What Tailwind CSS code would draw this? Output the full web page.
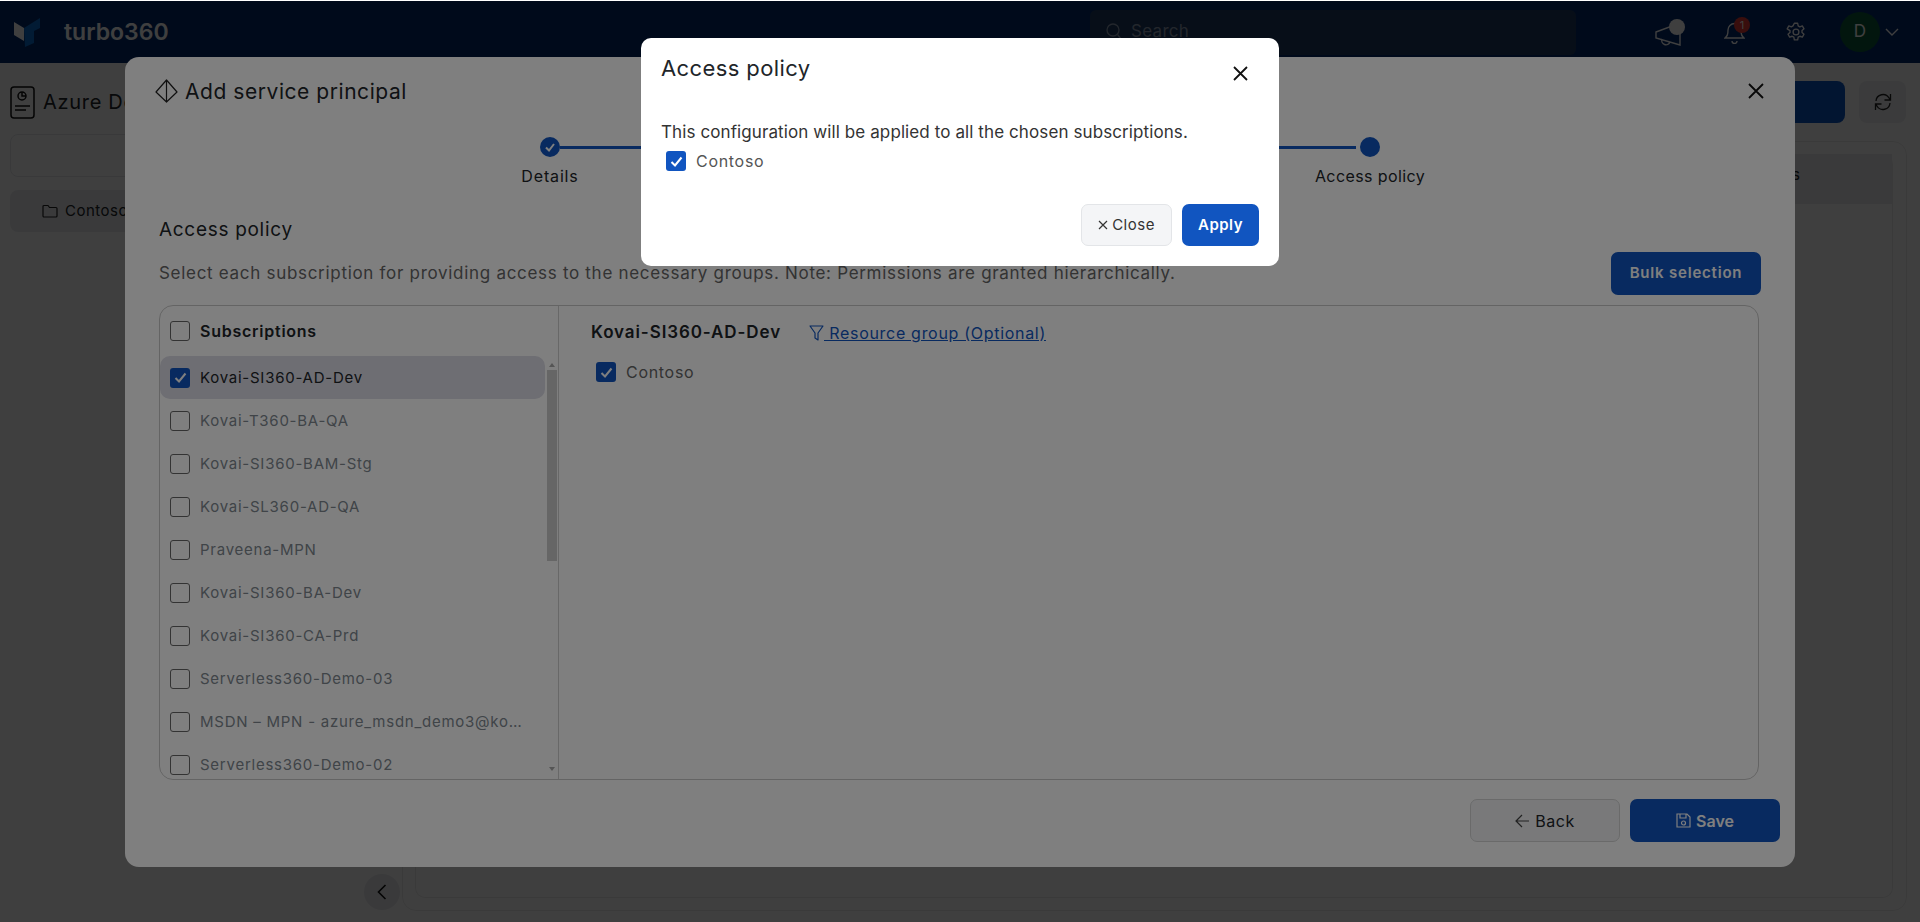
<!DOCTYPE html>
<html lang="en">
<head>
<meta charset="UTF-8" />
<title>turbo360 - Add service principal</title>
<script src="https://cdn.jsdelivr.net/npm/@tailwindcss/browser@4"></script>
</head>
<body class="bg-white h-[922px] overflow-hidden font-['Inter',sans-serif] text-[#212529]">

<!-- page behind the dialogs -->
<div class="h-px bg-white"></div>
<header class="h-[62px] bg-[#002a6e] flex items-center text-white">
  <svg class="ml-[14px] w-[27px] h-[29px] shrink-0" viewBox="0 0 27 29"><path d="M0 4l10 6v13L0 17z" fill="#ffffff"/><path d="M10 10l16-10v10l-6 3v12l-9 4z" fill="#0a6fd0"/></svg>
  <span class="ml-[23px] w-[106px] text-[23px] font-semibold leading-none">turbo360</span>
  <div class="ml-[920px] w-[486px] h-[45px] rounded-[6px] bg-[#1c3a63] flex items-center pl-4 gap-[9px] text-[#8c9bb0]">
    <svg class="w-4 h-[18px]" viewBox="0 0 16 18" fill="none" stroke="currentColor" stroke-width="1.3"><circle cx="7" cy="7" r="6"/><path d="M11.5 11.5l4 5"/></svg>
    <span class="text-[17px] tracking-[0.3px]">Search</span>
  </div>
  <div class="ml-[79px] relative w-[29px] h-[27px] shrink-0">
    <svg class="w-[29px] h-[27px]" viewBox="0 0 29 27" fill="none" stroke="#fff" stroke-width="1.4"><path d="M1 13l24-9v22L1 19zM7 20a4 4 0 0 0 8 3"/></svg>
    <span class="absolute right-[-1px] top-0 w-4 h-4 rounded-full bg-white"></span>
  </div>
  <div class="ml-[40px] relative w-[21px] h-[24px] shrink-0">
    <svg class="w-[21px] h-[24px]" viewBox="0 0 21 24" fill="none" stroke="#fff" stroke-width="1.4"><path d="M1 18c2-2 3-3 3-8a6.500 6.500 0 0 1 13 0c0 5 1 6 3 8zM8 21a2.500 2.500 0 0 0 5 0"/></svg>
    <span class="absolute left-[10px] top-[-3px] w-4 h-4 rounded-full bg-[#e53935] text-white text-[11px] leading-4 text-center">1</span>
  </div>
  <svg class="ml-[41px] w-5 h-[22px] shrink-0" viewBox="0 0 24 24" fill="none" stroke="#fff" stroke-width="1.6" stroke-linejoin="round"><circle cx="12" cy="12" r="3.500"/><path d="M10 1.500h4l.6 3.200 2 1.100 3-1.100 2 3.500-2.400 2.100v2.300l2.400 2.100-2 3.500-3-1.100-2 1.100-.6 3.200h-4l-.6-3.200-2-1.100-3 1.100-2-3.500 2.400-2.100v-2.300L1.400 8.200l2-3.500 3 1.100 2-1.100z"/></svg>
  <div class="ml-[34px] w-10 h-10 rounded-full bg-[#0a5a3a] flex items-center justify-center text-[17px] shrink-0">D</div>
  <svg class="ml-[5px] w-[14px] h-2 shrink-0" viewBox="0 0 14 8" fill="none" stroke="#fff" stroke-width="1.400"><path d="M1 1l6 6 6-6"/></svg>
</header>

<main class="flex h-[859px] pl-[10px]">
  <div class="w-[392px] shrink-0">
    <div class="h-[32px] mt-[23px] flex items-center gap-2">
      <svg class="w-[25px] h-[33px]" viewBox="0 0 25 33" fill="none" stroke="#111" stroke-width="1.500"><rect x="1" y="1" width="23" height="31" rx="3"/><circle cx="12" cy="10" r="4"/><path d="M12 6v4h4M5 20h15M5 24h11"/></svg>
      <span class="text-[20px] tracking-[0.7px] whitespace-nowrap">Azure Document</span>
    </div>
    <div class="w-[300px] h-[43px] mt-[16px] rounded-[8px] border border-[#e5e7eb]"></div>
    <div class="w-[300px] h-[42px] mt-[13px] rounded-[8px] bg-[#eaebef] flex items-center pl-8 gap-[7px]">
      <svg class="w-4 h-[14px]" viewBox="0 0 16 14" fill="none" stroke="#222" stroke-width="1.200"><path d="M1 2.500a1 1 0 0 1 1-1h4l1.500 2H14a1 1 0 0 1 1 1V12a1 1 0 0 1-1 1H2a1 1 0 0 1-1-1z"/></svg>
      <span class="text-[15px] tracking-[0.5px]">Contoso</span>
    </div>
    <div class="h-[690px] flex items-end justify-end pb-[12px] pr-[2px]">
      <button class="w-9 h-9 rounded-full bg-[#e9eaee] flex items-center justify-center">
        <svg class="w-[10px] h-[16px]" viewBox="0 0 10 16" fill="none" stroke="#111" stroke-width="1.600"><path d="M8.500 1l-7 7 7 7"/></svg>
      </button>
    </div>
  </div>
  <div class="w-[1505px] h-[848px] shrink-0 flex flex-col">
    <div class="h-[60px] shrink-0 mt-[18px] pr-[1px] flex justify-end items-start gap-[14px]">
      <div class="w-[200px] h-[42px] rounded-[8px] bg-[#0a55c4]"></div>
      <div class="w-[47px] h-[42px] rounded-[8px] bg-[#eceef1] flex items-center justify-center">
        <svg class="w-[18px] h-[20px]" viewBox="0 0 18 20" fill="none" stroke="#222" stroke-width="1.300"><path d="M2 9a7 7 0 0 1 13-3l1.500 2M16.500 2v6h-6M16 11a7 7 0 0 1-13 3l-1.500-2M1.500 18v-6h6"/></svg>
      </div>
    </div>
    <div class="h-[770px] shrink-0 border border-[#ebebeb] rounded-[14px] p-[12px] pr-[13px]">
      <div class="h-[744px] rounded-[10px] border border-[#ebebeb] border-t-0">
        <div class="h-[50px] bg-[#e9eaee] flex items-center justify-end pb-2 pr-[92px] text-[15px]">Details</div>
      </div>
    </div>
  </div>
</main>

<div class="fixed inset-x-0 bottom-0 top-px bg-black/50"></div>

<!-- add service principal dialog -->
<div class="fixed left-[125px] top-[57px] w-[1670px] h-[810px] bg-white rounded-[14px] overflow-hidden">
  <div class="h-[68px] flex items-center justify-between pl-[30px] pr-[31px]">
    <div class="flex items-center gap-[7px]">
      <svg class="w-[23px] h-[24px]" viewBox="0 0 23 24" fill="none" stroke="#222" stroke-width="1.200" stroke-linejoin="round"><path d="M11.500 1L22 13l-10.500 10L1 13zM11.500 1v22"/></svg>
      <h2 class="text-[21px] tracking-[0.55px] pt-[2px]">Add service principal</h2>
    </div>
    <svg class="w-4 h-4" viewBox="0 0 16 16" stroke="#111" stroke-width="1.800"><path d="M1 1l14 14M15 1L1 15"/></svg>
  </div>

  <div class="w-[900px] mx-auto">
    <div class="flex items-center px-[30px] mt-[12px]">
      <span class="w-5 h-5 rounded-full bg-[#1155c0] flex items-center justify-center">
        <svg class="w-3 h-3" viewBox="0 0 12 12" fill="none" stroke="#fff" stroke-width="2"><path d="M2 6.500l3 3 5-6.500"/></svg>
      </span>
      <span class="flex-1 h-[3px] bg-[#1155c0] mr-1"></span>
      <span class="w-5 h-5 rounded-full bg-[#1155c0]"></span>
    </div>
    <div class="flex justify-between mt-[7px] text-[16px] leading-6">
      <span class="w-20 text-center whitespace-nowrap tracking-[0.85px]">Details</span>
      <span class="w-20 flex justify-center whitespace-nowrap tracking-[0.4px]">Access policy</span>
    </div>
  </div>

  <div class="px-[34px]">
    <h3 class="mt-[28px] h-7 leading-7 text-[19px] tracking-[0.7px]">Access policy</h3>
    <div class="mt-[8px] h-[43px] flex items-center justify-between">
      <p class="text-[17px] tracking-[0.7px] text-[#666]">Select each subscription for providing access to the necessary groups. Note: Permissions are granted hierarchically.</p>
      <button class="w-[150px] h-[43px] rounded-[7px] bg-[#1155c0] text-white text-[15px] font-semibold tracking-[0.8px]">Bulk selection</button>
    </div>

    <div class="mt-[10px] w-[1600px] h-[475px] border border-[#c9c9c9] rounded-[14px] flex overflow-hidden">
      <div class="w-[399px] shrink-0 border-r border-[#d0d0d0]">
        <div class="h-[50px] flex items-center gap-[10px] pl-[10px]">
          <span class="w-5 h-5 rounded-[3px] border border-[#666] bg-white"></span>
          <span class="text-[16px] font-semibold tracking-[0.75px]">Subscriptions</span>
        </div>
        <div class="flex h-[424px]">
          <div class="w-[385px] shrink-0 overflow-hidden text-[15px] text-[#808890] tracking-[0.75px]">
            <div class="h-[43px] rounded-[10px] bg-[#dcdce6] flex items-center gap-[10px] pl-[10px] text-[#212529]">
              <span class="w-5 h-5 rounded-[3px] bg-[#1155c0] flex items-center justify-center"><svg class="w-[13px] h-[13px]" viewBox="0 0 13 13" fill="none" stroke="#fff" stroke-width="2"><path d="M1.500 7l3.500 3.500 6.500-8"/></svg></span>
              <span class="pt-px">Kovai-SI360-AD-Dev</span>
            </div>
            <div class="h-[43px] flex items-center gap-[10px] pl-[10px]"><span class="w-5 h-5 rounded-[3px] border border-[#666] bg-white"></span><span class="pt-px">Kovai-T360-BA-QA</span></div>
            <div class="h-[43px] flex items-center gap-[10px] pl-[10px]"><span class="w-5 h-5 rounded-[3px] border border-[#666] bg-white"></span><span class="pt-px">Kovai-SI360-BAM-Stg</span></div>
            <div class="h-[43px] flex items-center gap-[10px] pl-[10px]"><span class="w-5 h-5 rounded-[3px] border border-[#666] bg-white"></span><span class="pt-px">Kovai-SL360-AD-QA</span></div>
            <div class="h-[43px] flex items-center gap-[10px] pl-[10px]"><span class="w-5 h-5 rounded-[3px] border border-[#666] bg-white"></span><span class="pt-px">Praveena-MPN</span></div>
            <div class="h-[43px] flex items-center gap-[10px] pl-[10px]"><span class="w-5 h-5 rounded-[3px] border border-[#666] bg-white"></span><span class="pt-px">Kovai-SI360-BA-Dev</span></div>
            <div class="h-[43px] flex items-center gap-[10px] pl-[10px]"><span class="w-5 h-5 rounded-[3px] border border-[#666] bg-white"></span><span class="pt-px">Kovai-SI360-CA-Prd</span></div>
            <div class="h-[43px] flex items-center gap-[10px] pl-[10px]"><span class="w-5 h-5 rounded-[3px] border border-[#666] bg-white"></span><span class="pt-px">Serverless360-Demo-03</span></div>
            <div class="h-[43px] flex items-center gap-[10px] pl-[10px]"><span class="w-5 h-5 rounded-[3px] border border-[#666] bg-white"></span><span class="pt-px whitespace-nowrap">MSDN – MPN - azure_msdn_demo3@ko…</span></div>
            <div class="h-[43px] flex items-center gap-[10px] pl-[10px]"><span class="w-5 h-5 rounded-[3px] border border-[#666] bg-white"></span><span class="pt-px">Serverless360-Demo-02</span></div>
          </div>
          <div class="ml-[2px] w-[10px] flex flex-col items-center">
            <span class="mt-[7px] w-0 h-0 border-x-[3px] border-x-transparent border-b-[4px] border-b-[#aaa]"></span>
            <span class="mt-[3px] w-[10px] h-[191px] bg-[#cdcdcd]"></span>
            <span class="mt-[206px] w-0 h-0 border-x-[3px] border-x-transparent border-t-[4px] border-t-[#aaa]"></span>
          </div>
        </div>
      </div>
      <div class="flex-1 pl-[32px]">
        <div class="mt-[15px] flex items-center h-6">
          <span class="w-[190px] text-[17px] font-semibold tracking-[0.9px] whitespace-nowrap">Kovai-SI360-AD-Dev</span>
          <a href="#" class="ml-[28px] flex items-center text-[#1155c0] text-[16px] tracking-[0.7px] underline">
            <svg class="w-[15px] h-[16px]" viewBox="0 0 15 16" fill="none" stroke="currentColor" stroke-width="1.200" stroke-linejoin="round"><path d="M1 1h13L9 8v7l-3-2V8z"/></svg>
            <span class="whitespace-pre"> Resource group (Optional)</span>
          </a>
        </div>
        <div class="mt-[15px] ml-[5px] flex items-center gap-[10px] text-[16px] text-[#666] tracking-[0.7px]">
          <span class="w-5 h-5 rounded-[3px] bg-[#1155c0] flex items-center justify-center"><svg class="w-[13px] h-[13px]" viewBox="0 0 13 13" fill="none" stroke="#fff" stroke-width="2"><path d="M1.500 7l3.500 3.500 6.500-8"/></svg></span>
          <span>Contoso</span>
        </div>
      </div>
    </div>
  </div>

  <div class="mt-[19px] pr-[15px] flex justify-end gap-[10px]">
    <button class="w-[150px] h-[43px] rounded-[7px] border border-[#d5d5d5] bg-[#f2f3f5] flex items-center justify-center gap-[6px] text-[16px] tracking-[0.5px]">
      <svg class="w-[14px] h-[14px]" viewBox="0 0 14 14" fill="none" stroke="#444" stroke-width="1.200"><path d="M7 1L1 7l6 6M1 7h13"/></svg>Back
    </button>
    <button class="w-[150px] h-[43px] rounded-[7px] bg-[#1155c0] text-white flex items-center justify-center gap-[5px] text-[16px] font-semibold">
      <svg class="w-[15px] h-[15px]" viewBox="0 0 15 15" fill="none" stroke="#fff" stroke-width="1.200"><path d="M1 1h10l3 3v10H1zM4 1v4h6V1"/><circle cx="7.500" cy="10" r="2"/></svg>Save
    </button>
  </div>
</div>

<div class="fixed inset-x-0 bottom-0 top-px bg-black/50"></div>

<!-- access policy confirmation dialog -->
<div class="fixed left-[641px] top-[38px] w-[638px] h-[228px] bg-white rounded-[10px] pl-[20px] pr-[20px]">
  <div class="h-[60px] flex items-center justify-between">
    <h2 class="text-[22px] tracking-[0.4px]">Access policy</h2>
    <svg class="w-[15px] h-[15px] mt-[10px] mr-[11px]" viewBox="0 0 15 15" stroke="#111" stroke-width="1.800"><path d="M1 1l13 13M14 1L1 14"/></svg>
  </div>
  <p class="mt-[22px] h-6 leading-6 text-[17px] tracking-[0.1px] text-[#333] whitespace-nowrap">This configuration will be applied to all the chosen subscriptions.</p>
  <div class="ml-[5px] mt-[5px] flex items-center gap-[10px] text-[16px] text-[#555] tracking-[0.7px]">
    <span class="w-5 h-5 rounded-[3px] bg-[#1155c0] flex items-center justify-center"><svg class="w-[13px] h-[13px]" viewBox="0 0 13 13" fill="none" stroke="#fff" stroke-width="2"><path d="M1.500 7l3.500 3.500 6.500-8"/></svg></span>
    <span>Contoso</span>
  </div>
  <div class="mt-[31px] flex justify-end gap-[10px]">
    <button class="w-[91px] h-[42px] rounded-[7px] border border-[#e3e5e8] bg-[#f4f5f7] flex items-center justify-center gap-[4px] text-[15px] text-[#333] tracking-[0.5px]">
      <svg class="w-[10px] h-[10px]" viewBox="0 0 10 10" stroke="#333" stroke-width="1.200"><path d="M1 1l8 8M9 1L1 9"/></svg>Close
    </button>
    <button class="w-[77px] h-[42px] rounded-[7px] bg-[#1155c0] text-white text-[15px] font-semibold tracking-[0.5px]">Apply</button>
  </div>
</div>

</body>
</html>
